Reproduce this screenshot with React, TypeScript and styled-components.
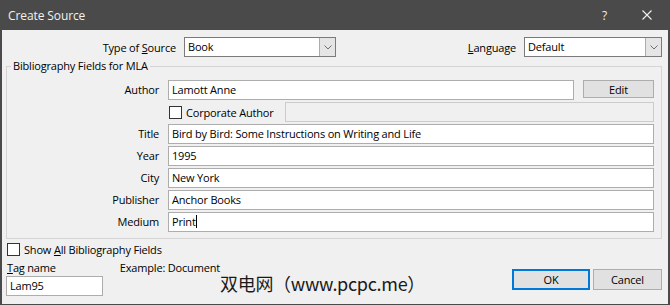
import styled, { createGlobalStyle } from 'styled-components';

const GlobalStyle = createGlobalStyle`
  html, body {
    margin: 0;
    padding: 0;
    background: #f0f0f0;
  }
  body {
    font-family: "Open Sans", "Noto Sans", Arial, sans-serif;
    font-size: 11px;
    letter-spacing: -0.18px;
    color: #000;
  }
`;

const fields = [
  { label: 'Title', value: 'Bird by Bird: Some Instructions on Writing and Life' },
  { label: 'Year', value: '1995' },
  { label: 'City', value: 'New York' },
  { label: 'Publisher', value: 'Anchor Books' },
  { label: 'Medium', value: 'Print', caret: true },
];

function Chevron() {
  return (
    <svg width="8" height="5" viewBox="0 0 8 5">
      <path d="M0.5 0.5 L4 4 L7.5 0.5" fill="none" stroke="#707070" strokeWidth="1" />
    </svg>
  );
}

function Select({ value, width }: { value: string; width: number }) {
  return (
    <SelectBox $width={width}>
      <SelectValue>{value}</SelectValue>
      <SelectArrow>
        <Chevron />
      </SelectArrow>
    </SelectBox>
  );
}

export default function App() {
  return (
    <>
      <GlobalStyle />
      <Window>
        <TitleBar>
          <TitleText>Create Source</TitleText>
          <TitleActions>
            <HelpIcon>?</HelpIcon>
            <svg width="10" height="10" viewBox="0 0 10 10">
              <path d="M0.5 0.5 L9.5 9.5 M9.5 0.5 L0.5 9.5" stroke="#f2f2f2" strokeWidth="1.1" />
            </svg>
          </TitleActions>
        </TitleBar>

        <Body>
          <TopRow>
            <TopLabel $width={174}>
              Type of <u>S</u>ource
            </TopLabel>
            <Select value="Book" width={152} />
            <Spacer />
            <TopLabel>
              <u>L</u>anguage
            </TopLabel>
            <Select value="Default" width={138} />
          </TopRow>

          <Group>
            <Legend>Bibliography Fields for MLA</Legend>
            <FieldGrid>
              <FieldLabel>Author</FieldLabel>
              <AuthorRow>
                <TextBox>Lamott Anne</TextBox>
                <Button $width={71} $height={18}>Edit</Button>
              </AuthorRow>

              <span />
              <CorporateRow>
                <CheckLabel>
                  <CheckBox />
                  <span>Corporate Author</span>
                </CheckLabel>
                <TextBox $disabled />
              </CorporateRow>

              {fields.map((f) => (
                <Row key={f.label}>
                  <FieldLabel>{f.label}</FieldLabel>
                  <TextBox>
                    {f.value}
                    {f.caret && <Caret />}
                  </TextBox>
                </Row>
              ))}
            </FieldGrid>
          </Group>

          <ShowAllRow>
            <CheckLabel>
              <CheckBox />
              <span>
                Show <u>A</u>ll Bibliography Fields
              </span>
            </CheckLabel>
          </ShowAllRow>

          <Footer>
            <TagColumn>
              <TagLabels>
                <TagLabel>
                  <u>T</u>ag name
                </TagLabel>
                <span>Example: Document</span>
              </TagLabels>
              <TagBox>Lam95</TagBox>
            </TagColumn>
            <Watermark>双电网（www.pcpc.me）</Watermark>
            <Buttons>
              <Button $width={78} $height={21} $primary>
                OK
              </Button>
              <Button $width={69} $height={21}>Cancel</Button>
            </Buttons>
          </Footer>
        </Body>
      </Window>
    </>
  );
}

/* Styled Components */

const Window = styled.div`
  width: 670px;
  height: 305px;
  display: flex;
  flex-direction: column;
  background: #4a4a4a;
  overflow: hidden;
`;

const TitleBar = styled.div`
  height: 30px;
  flex: none;
  display: flex;
  align-items: center;
  justify-content: space-between;
  padding: 0 18px 0 8px;
  color: #f2f2f2;
`;

const TitleText = styled.span`
  font-size: 12px;
  letter-spacing: -0.1px;
`;

const TitleActions = styled.div`
  display: flex;
  align-items: center;
  gap: 35px;
`;

const HelpIcon = styled.span`
  font-size: 12px;
`;

const Body = styled.div`
  flex: 1;
  margin: 0 2px 2px;
  background: #f0f0f0;
  display: flex;
  flex-direction: column;
  padding: 7px 6px 0 4px;
`;

const TopRow = styled.div`
  display: flex;
  align-items: center;
  height: 20px;
  margin-left: -4px;
`;

const TopLabel = styled.span<{ $width?: number }>`
  width: ${(p) => (p.$width ? `${p.$width}px` : 'auto')};
  text-align: right;
  margin-right: 8px;
`;

const Spacer = styled.div`
  flex: 1;
`;

const SelectBox = styled.div<{ $width: number }>`
  width: ${(p) => p.$width}px;
  height: 20px;
  box-sizing: border-box;
  display: flex;
  background: #fff;
  border: 1px solid #7a7a7a;
`;

const SelectValue = styled.span`
  flex: 1;
  padding-left: 3px;
  line-height: 18px;
`;

const SelectArrow = styled.span`
  width: 15px;
  display: flex;
  align-items: center;
  justify-content: center;
  background: #e5e5e5;
  border-left: 1px solid #acacac;
`;

const Group = styled.fieldset`
  margin: 2px 0 0;
  padding: 0 7px 6px 0;
  border: 1px solid #d5d5d5;
  min-width: 0;
`;

const Legend = styled.legend`
  margin-left: 4px;
  padding: 0 2px;
  line-height: 14px;
`;

const FieldGrid = styled.div`
  display: grid;
  grid-template-columns: 152px 1fr;
  column-gap: 9px;
  row-gap: 2px;
  padding-top: 7px;
`;

const Row = styled.div`
  display: contents;
`;

const FieldLabel = styled.span`
  text-align: right;
  line-height: 20px;
`;

const AuthorRow = styled.div`
  display: flex;
  align-items: flex-start;
  gap: 9px;
`;

const CorporateRow = styled.div`
  display: flex;
  align-items: center;
  gap: 11px;
  padding-left: 1px;
`;

const TextBox = styled.div<{ $disabled?: boolean }>`
  flex: 1;
  height: 20px;
  box-sizing: border-box;
  padding-left: 3px;
  line-height: 18px;
  background: ${(p) => (p.$disabled ? '#f0f0f0' : '#fff')};
  border: 1px solid ${(p) => (p.$disabled ? '#cccccc' : '#adadad')};
  white-space: nowrap;
`;

const Caret = styled.span`
  display: inline-block;
  width: 1px;
  height: 13px;
  background: #000;
  vertical-align: -2px;
`;

const Button = styled.div<{ $width: number; $height: number; $primary?: boolean }>`
  width: ${(p) => p.$width}px;
  height: ${(p) => p.$height}px;
  box-sizing: border-box;
  display: flex;
  align-items: center;
  justify-content: center;
  background: #e1e1e1;
  border: ${(p) => (p.$primary ? '2px solid #0078d7' : '1px solid #adadad')};
`;

const CheckLabel = styled.span`
  display: flex;
  align-items: center;
  gap: 4px;
  line-height: 15px;
  white-space: nowrap;
`;

const CheckBox = styled.span`
  flex: none;
  width: 13px;
  height: 13px;
  box-sizing: border-box;
  border: 1px solid #333;
  background: #fff;
`;

const ShowAllRow = styled.div`
  margin-top: 3px;
  margin-left: 1px;
`;

const Footer = styled.div`
  display: flex;
  align-items: flex-end;
  margin-top: 4px;
`;

const TagColumn = styled.div`
  display: flex;
  flex-direction: column;
  gap: 1px;
  width: 214px;
  flex: none;
`;

const TagLabels = styled.div`
  display: flex;
  line-height: 14px;
  padding-left: 1px;
  white-space: nowrap;
`;

const TagLabel = styled.span`
  width: 116px;
`;

const TagBox = styled.div`
  width: 97px;
  height: 20px;
  box-sizing: border-box;
  padding-left: 3px;
  line-height: 18px;
  background: #fff;
  border: 1px solid #adadad;
  margin-bottom: 8px;
`;

const Watermark = styled.span`
  font-family: "Noto Sans CJK SC", sans-serif;
  font-size: 18px;
  letter-spacing: -0.3px;
  line-height: 24px;
  color: #1a1a1a;
  margin-bottom: 9px;
  white-space: nowrap;
`;

const Buttons = styled.div`
  margin-left: auto;
  display: flex;
  gap: 3px;
  margin-bottom: 14px;
`;
